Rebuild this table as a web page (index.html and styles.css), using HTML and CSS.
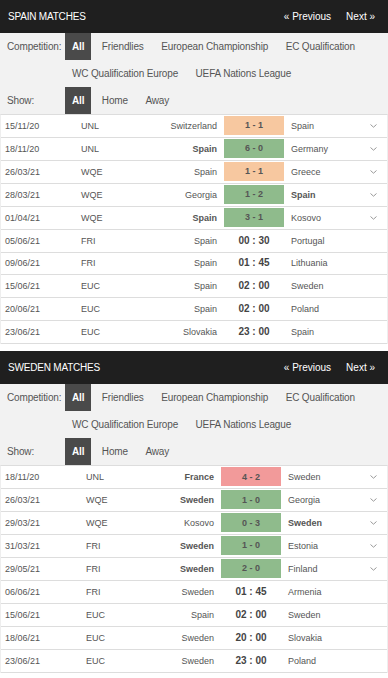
FILE: index.html
```html
<!DOCTYPE html>
<html>
<head>
<meta charset="utf-8">
<link rel="stylesheet" href="styles.css">
</head>
<body>
<section class="block spain">
  <div class="head">
    <span class="title">SPAIN MATCHES</span>
    <span class="nav"><a>« Previous</a><a>Next »</a></span>
  </div>
  <div class="filters">
    <div class="frow">
      <span class="label">Competition:</span>
      <div class="items">
        <span class="item active">All</span>
        <span class="item">Friendlies</span>
        <span class="item">European Championship</span>
        <span class="item">EC Qualification</span>
        <span class="item">WC Qualification Europe</span>
        <span class="item">UEFA Nations League</span>
      </div>
    </div>
    <div class="frow">
      <span class="label">Show:</span>
      <div class="items">
        <span class="item active">All</span>
        <span class="item">Home</span>
        <span class="item">Away</span>
      </div>
    </div>
  </div>
  <div class="table">
    <div class="row"><span class="date">15/11/20</span><span class="comp">UNL</span><span class="home">Switzerland</span><span class="score"><b class="draw">1 - 1</b></span><span class="away">Spain</span><span class="chev"><svg viewBox="0 0 7 4" width="7" height="4"><path d="M0.5 0.5 L3.5 3.2 L6.5 0.5" fill="none" stroke="#999" stroke-width="1"/></svg></span></div>
    <div class="row"><span class="date">18/11/20</span><span class="comp">UNL</span><span class="home strong">Spain</span><span class="score"><b class="win">6 - 0</b></span><span class="away">Germany</span><span class="chev"><svg viewBox="0 0 7 4" width="7" height="4"><path d="M0.5 0.5 L3.5 3.2 L6.5 0.5" fill="none" stroke="#999" stroke-width="1"/></svg></span></div>
    <div class="row"><span class="date">26/03/21</span><span class="comp">WQE</span><span class="home">Spain</span><span class="score"><b class="draw">1 - 1</b></span><span class="away">Greece</span><span class="chev"><svg viewBox="0 0 7 4" width="7" height="4"><path d="M0.5 0.5 L3.5 3.2 L6.5 0.5" fill="none" stroke="#999" stroke-width="1"/></svg></span></div>
    <div class="row"><span class="date">28/03/21</span><span class="comp">WQE</span><span class="home">Georgia</span><span class="score"><b class="win">1 - 2</b></span><span class="away strong">Spain</span><span class="chev"><svg viewBox="0 0 7 4" width="7" height="4"><path d="M0.5 0.5 L3.5 3.2 L6.5 0.5" fill="none" stroke="#999" stroke-width="1"/></svg></span></div>
    <div class="row"><span class="date">01/04/21</span><span class="comp">WQE</span><span class="home strong">Spain</span><span class="score"><b class="win">3 - 1</b></span><span class="away">Kosovo</span><span class="chev"><svg viewBox="0 0 7 4" width="7" height="4"><path d="M0.5 0.5 L3.5 3.2 L6.5 0.5" fill="none" stroke="#999" stroke-width="1"/></svg></span></div>
    <div class="row"><span class="date">05/06/21</span><span class="comp">FRI</span><span class="home">Spain</span><span class="score"><b class="time">00 : 30</b></span><span class="away">Portugal</span><span class="chev"></span></div>
    <div class="row"><span class="date">09/06/21</span><span class="comp">FRI</span><span class="home">Spain</span><span class="score"><b class="time">01 : 45</b></span><span class="away">Lithuania</span><span class="chev"></span></div>
    <div class="row"><span class="date">15/06/21</span><span class="comp">EUC</span><span class="home">Spain</span><span class="score"><b class="time">02 : 00</b></span><span class="away">Sweden</span><span class="chev"></span></div>
    <div class="row"><span class="date">20/06/21</span><span class="comp">EUC</span><span class="home">Spain</span><span class="score"><b class="time">02 : 00</b></span><span class="away">Poland</span><span class="chev"></span></div>
    <div class="row"><span class="date">23/06/21</span><span class="comp">EUC</span><span class="home">Slovakia</span><span class="score"><b class="time">23 : 00</b></span><span class="away">Spain</span><span class="chev"></span></div>
  </div>
</section>

<section class="block sweden">
  <div class="head">
    <span class="title">SWEDEN MATCHES</span>
    <span class="nav"><a>« Previous</a><a>Next »</a></span>
  </div>
  <div class="filters">
    <div class="frow">
      <span class="label">Competition:</span>
      <div class="items">
        <span class="item active">All</span>
        <span class="item">Friendlies</span>
        <span class="item">European Championship</span>
        <span class="item">EC Qualification</span>
        <span class="item">WC Qualification Europe</span>
        <span class="item">UEFA Nations League</span>
      </div>
    </div>
    <div class="frow">
      <span class="label">Show:</span>
      <div class="items">
        <span class="item active">All</span>
        <span class="item">Home</span>
        <span class="item">Away</span>
      </div>
    </div>
  </div>
  <div class="table">
    <div class="row"><span class="date">18/11/20</span><span class="comp">UNL</span><span class="home strong">France</span><span class="score"><b class="loss">4 - 2</b></span><span class="away">Sweden</span><span class="chev"><svg viewBox="0 0 7 4" width="7" height="4"><path d="M0.5 0.5 L3.5 3.2 L6.5 0.5" fill="none" stroke="#999" stroke-width="1"/></svg></span></div>
    <div class="row"><span class="date">26/03/21</span><span class="comp">WQE</span><span class="home strong">Sweden</span><span class="score"><b class="win">1 - 0</b></span><span class="away">Georgia</span><span class="chev"><svg viewBox="0 0 7 4" width="7" height="4"><path d="M0.5 0.5 L3.5 3.2 L6.5 0.5" fill="none" stroke="#999" stroke-width="1"/></svg></span></div>
    <div class="row"><span class="date">29/03/21</span><span class="comp">WQE</span><span class="home">Kosovo</span><span class="score"><b class="win">0 - 3</b></span><span class="away strong">Sweden</span><span class="chev"><svg viewBox="0 0 7 4" width="7" height="4"><path d="M0.5 0.5 L3.5 3.2 L6.5 0.5" fill="none" stroke="#999" stroke-width="1"/></svg></span></div>
    <div class="row"><span class="date">31/03/21</span><span class="comp">FRI</span><span class="home strong">Sweden</span><span class="score"><b class="win">1 - 0</b></span><span class="away">Estonia</span><span class="chev"><svg viewBox="0 0 7 4" width="7" height="4"><path d="M0.5 0.5 L3.5 3.2 L6.5 0.5" fill="none" stroke="#999" stroke-width="1"/></svg></span></div>
    <div class="row"><span class="date">29/05/21</span><span class="comp">FRI</span><span class="home strong">Sweden</span><span class="score"><b class="win">2 - 0</b></span><span class="away">Finland</span><span class="chev"><svg viewBox="0 0 7 4" width="7" height="4"><path d="M0.5 0.5 L3.5 3.2 L6.5 0.5" fill="none" stroke="#999" stroke-width="1"/></svg></span></div>
    <div class="row"><span class="date">06/06/21</span><span class="comp">FRI</span><span class="home">Sweden</span><span class="score"><b class="time">01 : 45</b></span><span class="away">Armenia</span><span class="chev"></span></div>
    <div class="row"><span class="date">15/06/21</span><span class="comp">EUC</span><span class="home">Spain</span><span class="score"><b class="time">02 : 00</b></span><span class="away">Sweden</span><span class="chev"></span></div>
    <div class="row"><span class="date">18/06/21</span><span class="comp">EUC</span><span class="home">Sweden</span><span class="score"><b class="time">20 : 00</b></span><span class="away">Slovakia</span><span class="chev"></span></div>
    <div class="row"><span class="date">23/06/21</span><span class="comp">EUC</span><span class="home">Sweden</span><span class="score"><b class="time">23 : 00</b></span><span class="away">Poland</span><span class="chev"></span></div>
  </div>
</section>
</body>
</html>
```
FILE: styles.css
```css
html, body {
  margin: 0;
  padding: 0;
  background: #fff;
}
body {
  width: 388px;
  font-family: "Liberation Sans", Arial, sans-serif;
  color: #555;
}
.block + .block {
  margin-top: 7px;
}
.head {
  display: flex;
  justify-content: space-between;
  align-items: center;
  height: 33px;
  background: #1f1f1f;
  color: #fff;
  font-size: 10px;
  padding: 0 13px 0 8px;
}
.title {
  letter-spacing: -0.2px;
}
.nav {
  display: flex;
  gap: 15px;
}
.filters {
  background: #f2f2f2;
  font-size: 10px;
  color: #555;
  letter-spacing: -0.15px;
}
.frow {
  display: flex;
  align-items: flex-start;
}
.label {
  flex: 0 0 58px;
  padding-left: 7px;
  line-height: 27px;
}
.items {
  flex: 1;
  display: flex;
  flex-wrap: wrap;
  column-gap: 3.5px;
}
.item {
  padding: 0 7px;
  line-height: 27px;
  height: 27px;
  white-space: nowrap;
}
.item.active {
  background: #4a4a4a;
  color: #fff;
  font-weight: bold;
}
.table {
  border-top: 1px solid #ddd;
  border-left: 1px solid #eee;
  border-right: 1px solid #eee;
  font-size: 9px;
}
.row {
  display: grid;
  height: 21.93px;
  border-bottom: 1px solid #ddd;
  align-items: center;
}
.spain .row {
  grid-template-columns: 75px 70px 78px 60px 1fr 20px;
}
.sweden .row {
  grid-template-columns: 80px 70px 70px 60px 1fr 20px;
}
.date {
  padding-left: 4px;
}
.comp {
  padding-left: 5px;
}
.home {
  text-align: right;
  padding-right: 7px;
}
.away {
  padding-left: 7px;
}
.strong {
  font-weight: bold;
}
.score {
  align-self: stretch;
  display: flex;
  padding: 1px 0 2px;
}
.score b {
  flex: 1;
  display: flex;
  align-items: center;
  justify-content: center;
  font-weight: bold;
  color: #555;
}
.score b.draw { background: #f7c8a0; }
.score b.win { background: #8fbb8c; }
.score b.loss { background: #f29a9a; }
.score b.time {
  font-size: 10px;
  color: #444;
}
.chev {
  display: flex;
  align-items: center;
  justify-content: flex-start;
  padding-left: 3px;
}
```
